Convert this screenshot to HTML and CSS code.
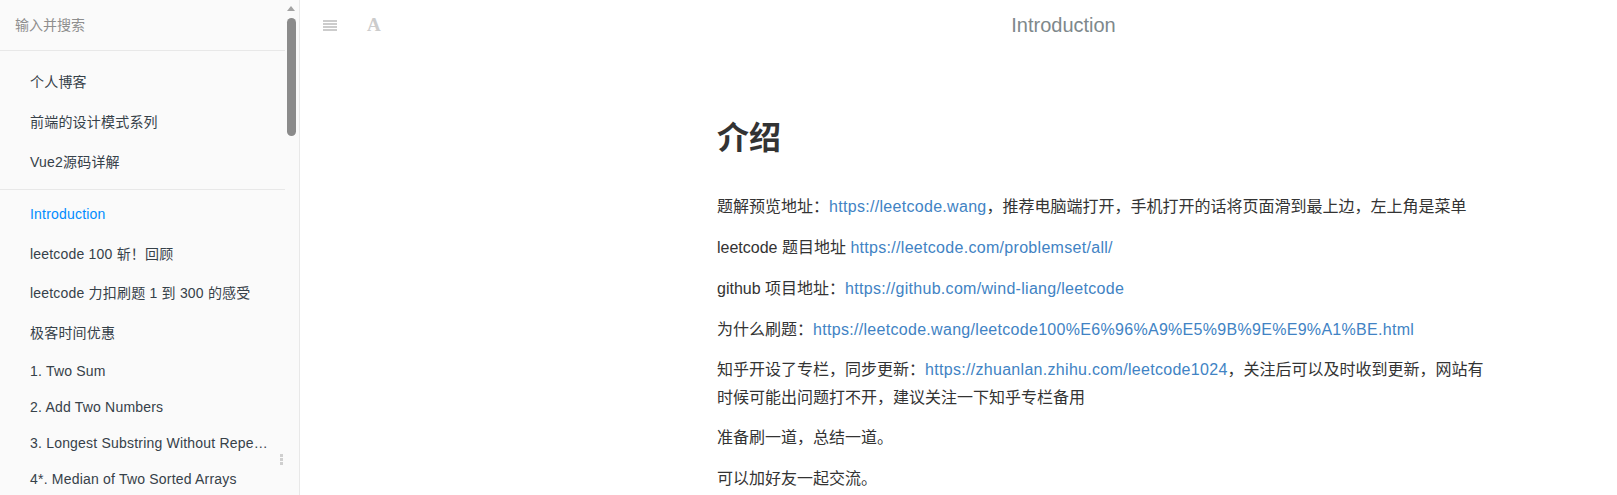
FILE: index.html
```html
<!DOCTYPE html>
<html lang="zh-CN">
<head>
    <meta charset="UTF-8">
    <title>Introduction · leetcode</title>
    <link rel="stylesheet" href="styles.css">
</head>
<body>
    <div class="book">
        <aside class="book-summary">
            <div class="summary-inner">
                <div class="book-search">
                    <input type="text" placeholder="输入并搜索">
                </div>
                <ul class="summary links">
                    <li><a href="#">个人博客</a></li>
                    <li><a href="#">前端的设计模式系列</a></li>
                    <li><a href="#">Vue2源码详解</a></li>
                </ul>
                <ul class="summary chapters">
                    <li class="active"><a href="#">Introduction</a></li>
                    <li><a href="#">leetcode 100 斩！回顾</a></li>
                    <li><a href="#">leetcode 力扣刷题 1 到 300 的感受</a></li>
                    <li><a href="#">极客时间优惠</a></li>
                    <li class="problem"><a href="#">1. Two Sum</a></li>
                    <li class="problem"><a href="#">2. Add Two Numbers</a></li>
                    <li class="problem"><a href="#">3. Longest Substring Without Repeating Characters</a></li>
                    <li class="problem"><a href="#">4*. Median of Two Sorted Arrays</a></li>
                </ul>
            </div>

            <!-- 侧栏滚动条 -->
            <div class="scrollbar">
                <span class="scroll-arrow"></span>
                <span class="scroll-thumb"></span>
            </div>

            <div class="resize-grip">
                <span></span><span></span><span></span>
            </div>
        </aside>

        <main class="book-body">
            <header class="book-header">
                <a class="btn" href="#" aria-label="目录">
                    <svg width="14" height="11" viewBox="0 0 14 11">
                        <rect x="0" y="0" width="14" height="2"/>
                        <rect x="0" y="3" width="14" height="2"/>
                        <rect x="0" y="6" width="14" height="2"/>
                        <rect x="0" y="9" width="14" height="2"/>
                    </svg>
                </a>
                <a class="btn font-btn" href="#" aria-label="字体设置">A</a>
                <h1 class="header-title">Introduction</h1>
            </header>

            <section class="page-inner">
                <h1>介绍</h1>
                <p>题解预览地址：<a href="#">https://leetcode.wang</a>，推荐电脑端打开，手机打开的话将页面滑到最上边，左上角是菜单</p>
                <p>leetcode 题目地址 <a href="#">https://leetcode.com/problemset/all/</a></p>
                <p>github 项目地址：<a href="#">https://github.com/wind-liang/leetcode</a></p>
                <p>为什么刷题：<a href="#">https://leetcode.wang/leetcode100%E6%96%A9%E5%9B%9E%E9%A1%BE.html</a></p>
                <p>知乎开设了专栏，同步更新：<a href="#">https://zhuanlan.zhihu.com/leetcode1024</a>，关注后可以及时收到更新，网站有时候可能出问题打不开，建议关注一下知乎专栏备用</p>
                <p>准备刷一道，总结一道。</p>
                <p>可以加好友一起交流。</p>
            </section>
        </main>
    </div>
</body>
</html>
```

FILE: styles.css
```css
:root {
    --summary-bg: #fafafa;
    --line: rgba(0, 0, 0, 0.07);
    --summary-text: #364149;
    --active-blue: #008cff;
    --text-dark: #333333;
    --link-blue: #4183c4;
    --header-gray: #7e888b;
    --icon-gray: #cccccc;
}

html, body {
    height: 100%;
}

body {
    margin: 0;
    overflow: hidden;
    font-family: "Liberation Sans", "Noto Sans CJK SC", Arial, sans-serif;
    color: var(--text-dark);
    background: #ffffff;
}

.book {
    display: flex;
    height: 100vh;
}

/* 左侧目录 */
.book-summary {
    position: relative;
    flex: 0 0 300px;
    display: flex;
    background: var(--summary-bg);
    border-right: 1px solid var(--line);
    box-sizing: border-box;
    overflow: hidden;
}

.summary-inner {
    flex: 1;
    min-width: 0;
}

.book-search {
    height: 51px;
    border-bottom: 1px solid var(--line);
    box-sizing: border-box;
    display: flex;
    align-items: center;
    padding: 0 15px;
}

.book-search input {
    width: 100%;
    border: none;
    outline: none;
    background: transparent;
    padding: 0;
    font-family: inherit;
    font-size: 14px;
    color: var(--summary-text);
}

.book-search input::placeholder {
    color: #8e8e8e;
}

.summary {
    list-style: none;
    margin: 0;
    padding: 0;
    font-size: 14px;
    line-height: 1.4;
    letter-spacing: 0.2px;
}

.summary.links {
    padding: 11px 0 7px;
    border-bottom: 1px solid var(--line);
}

.summary.chapters {
    padding-top: 5px;
}

.summary li a {
    display: block;
    padding: 10px 15px 10px 30px;
    color: var(--summary-text);
    text-decoration: none;
    white-space: nowrap;
    overflow: hidden;
    text-overflow: ellipsis;
}

.summary.links li a {
    line-height: 20px;
}

.summary li.problem a {
    padding-top: 8px;
    padding-bottom: 8px;
    line-height: 20px;
}

.summary li.active a {
    color: var(--active-blue);
}

.scrollbar {
    flex: 0 0 14px;
    display: flex;
    flex-direction: column;
    padding-left: 2px;
    box-sizing: border-box;
}

.scroll-arrow {
    width: 0;
    height: 0;
    margin-top: 6px;
    border-left: 4px solid transparent;
    border-right: 4px solid transparent;
    border-bottom: 5px solid #a3a3a3;
}

.scroll-thumb {
    width: 9px;
    height: 118px;
    margin-top: 7px;
    border-radius: 5px;
    background: #8b8b8b;
}

.resize-grip {
    position: absolute;
    left: 280px;
    top: 454px;
    display: flex;
    flex-direction: column;
    gap: 1px;
}

.resize-grip span {
    width: 3px;
    height: 3px;
    background: #cfcfcf;
}

/* 右侧正文 */
.book-body {
    flex: 1;
    min-width: 0;
}

.book-header {
    height: 50px;
    display: flex;
    align-items: center;
    padding-left: 8px;
}

.btn {
    display: block;
    padding: 0 15px;
    line-height: 50px;
    color: var(--icon-gray);
    text-decoration: none;
}

.btn svg {
    display: block;
    fill: var(--icon-gray);
}

.font-btn {
    width: 14px;
    font-family: "Liberation Serif", "DejaVu Serif", serif;
    font-weight: 700;
    font-size: 19px;
}

.header-title {
    flex: 1;
    margin: 0;
    padding-left: 114px;
    text-align: center;
    font-size: 20px;
    font-weight: 400;
    line-height: 50px;
    color: var(--header-gray);
}

.page-inner {
    width: 770px;
    margin-left: 417px;
    padding-top: 20px;
    font-size: 16px;
    line-height: 1.7;
}

.page-inner h1 {
    margin: 49px 0 35px;
    font-size: 32px;
    line-height: 1.225;
    font-weight: 700;
    color: var(--text-dark);
}

.page-inner p {
    margin: 0 0 0.85em;
}

.page-inner a {
    color: var(--link-blue);
    text-decoration: none;
    letter-spacing: 0.3px;
}
```
